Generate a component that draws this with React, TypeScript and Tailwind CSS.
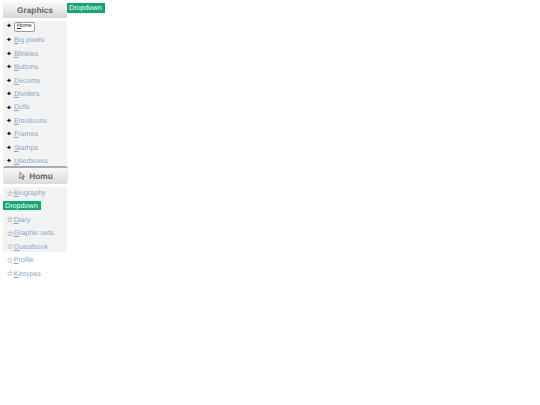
const graphics = ['Big pixels', 'Blinkies', 'Buttons', 'Decome', 'Dividers', 'Dolls', 'Emoticons', 'Frames', 'Stamps', 'Userboxes'];
const shaded = ['Diary', 'Graphic sets', 'Guestbook'];
const plain = ['Profile', 'Kintypes'];

function Label({ text }: { text: string }) {
    return (
        <a className="text-[7.1px] text-[#86a7c8]">
            <span className="underline">{text[0]}</span>{text.slice(1)}
        </a>
    );
}

function Dropdown() {
    return <div className="h-[9.5px] w-[38px] bg-[#10a974] text-white text-[7.2px] leading-[9.5px] px-[2px] whitespace-nowrap">Dropdown</div>;
}

function Row({ text, star }: { text: string; star: string }) {
    return (
        <li className={star === '✦' ? 'h-[10.75px] pt-[2px] flex items-center pl-[3px] leading-none' : 'h-[10.75px] pt-[2px] flex items-center pl-[3.5px] leading-none'}>
            <span className={star === '✦' ? 'text-[7px] text-black mr-[2px]' : 'text-[8px] text-[#666]'}>{star}</span>
            <Label text={text} />
        </li>
    );
}

export default function App() {
    return (
        <div className="min-h-[405px] bg-white flex items-start [text-rendering:geometricPrecision]" style={{ fontFamily: '"Liberation Sans", Arial, sans-serif' }}>
            <div className="w-[68px] shrink-0 pl-[3px]">
                <div className="w-[64px] h-[17.5px] flex items-center justify-center bg-gradient-to-b from-white to-[#d6d6d6] pt-[2px] text-[8.3px] font-bold text-[#666]">Graphics</div>
                <ul className="w-[64px] mt-[3px] pt-[0.5px] flex flex-col gap-[2.7px] bg-[#f3f3f3]">
                    <li className="h-[10.75px] pt-[1px] flex items-center pl-[3px] leading-none">
                        <span className="text-[7px] text-black mr-[2px]">✦</span>
                        <span className="h-[9.5px] flex items-center px-[2px] border border-[#999] rounded-[2px] bg-white text-[5.5px] leading-[9px] text-[#333]"><span className="underline">H</span>ome</span>
                    </li>
                    {graphics.map((g) => <Row key={g} text={g} star="✦" />)}
                </ul>
                <div className="w-[65px] h-[17.5px] pt-[1px] flex items-center justify-center gap-[3px] rounded-[3px] border-t-2 border-[#aaa] bg-gradient-to-b from-[#f8f8f8] to-[#dadada] text-[8.3px] font-bold text-[#666]">
                    <svg width="8" height="10" viewBox="0 0 9 10" fill="none" stroke="#555" strokeWidth="0.8"><path d="M2 1v7l2-2 1.500 3 1-.5L5 5.500h2.500z" /></svg>
                    Homu
                </div>
                <ul className="w-[64px] mt-[3.5px] flex flex-col gap-[2.7px] bg-[#f3f3f3]">
                    <Row text="Biography" star="☆" />
                    <li className="h-[10.75px]"><Dropdown /></li>
                    {shaded.map((s) => <Row key={s} text={s} star="☆" />)}
                </ul>
                <ul className="w-[64px] mt-[2.7px] flex flex-col gap-[2.7px]">
                    {plain.map((p) => <Row key={p} text={p} star="☆" />)}
                </ul>
            </div>
            <div className="mt-[3px] -ml-[1px]"><Dropdown /></div>
        </div>
    );
}
